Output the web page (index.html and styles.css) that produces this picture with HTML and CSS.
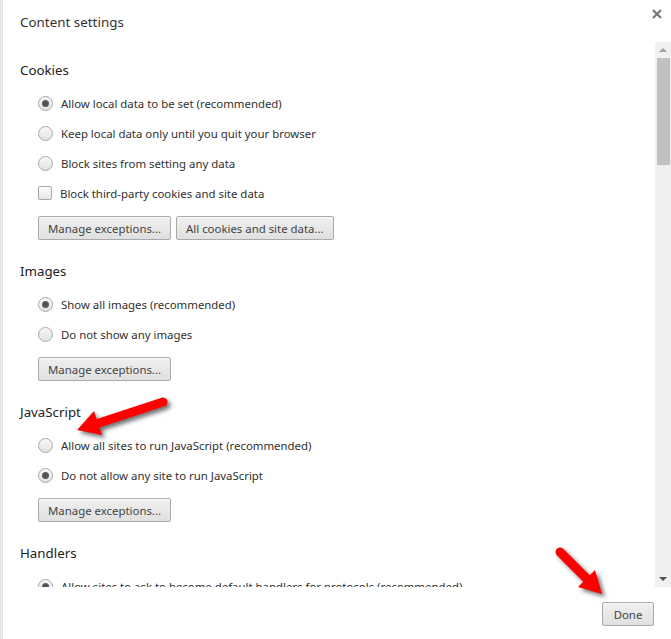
FILE: index.html
```html
<!DOCTYPE html>
<html lang="en">
<head>
    <meta charset="UTF-8">
    <meta name="viewport" content="width=device-width, initial-scale=1.0">
    <title>Content settings</title>
    <link rel="stylesheet" href="styles.css">
</head>
<body>
    <div class="page">
        <div class="edge"></div>

        <div class="dialog">
            <!-- Header -->
            <div class="dialog-header">
                <h1 class="dialog-title">Content settings</h1>
                <button class="close-button" aria-label="Close">
                    <svg width="10" height="10" viewBox="0 0 10 10">
                        <path d="M1 1 L9 9 M9 1 L1 9" stroke="#777" stroke-width="2.2" fill="none"/>
                    </svg>
                </button>
            </div>

            <!-- Scrolling body -->
            <div class="dialog-body">
                <div class="settings">
                    <section class="section first">
                        <h3>Cookies</h3>
                        <label class="row"><span class="radio checked"></span>Allow local data to be set (recommended)</label>
                        <label class="row"><span class="radio"></span>Keep local data only until you quit your browser</label>
                        <label class="row"><span class="radio"></span>Block sites from setting any data</label>
                        <label class="row"><span class="checkbox"></span>Block third-party cookies and site data</label>
                        <div class="buttons">
                            <button class="btn">Manage exceptions...</button>
                            <button class="btn">All cookies and site data...</button>
                        </div>
                    </section>

                    <section class="section">
                        <h3>Images</h3>
                        <label class="row"><span class="radio checked"></span>Show all images (recommended)</label>
                        <label class="row"><span class="radio"></span>Do not show any images</label>
                        <div class="buttons">
                            <button class="btn">Manage exceptions...</button>
                        </div>
                    </section>

                    <section class="section">
                        <h3>JavaScript</h3>
                        <label class="row"><span class="radio"></span>Allow all sites to run JavaScript (recommended)</label>
                        <label class="row"><span class="radio checked"></span>Do not allow any site to run JavaScript</label>
                        <div class="buttons">
                            <button class="btn">Manage exceptions...</button>
                        </div>
                    </section>

                    <section class="section">
                        <h3>Handlers</h3>
                        <label class="row"><span class="radio checked"></span>Allow sites to ask to become default handlers for protocols (recommended)</label>
                    </section>
                </div>

                <!-- Fake scrollbar -->
                <div class="scrollbar">
                    <span class="arrow up"></span>
                    <div class="thumb"></div>
                    <span class="arrow down"></span>
                </div>
            </div>

            <!-- Footer -->
            <div class="dialog-footer">
                <button class="btn done">Done</button>
            </div>
        </div>
    </div>

    <!-- Red annotation arrows drawn over the screenshot -->
    <svg class="annotations" width="671" height="639" viewBox="0 0 671 639">
        <g class="arrow-mark">
            <line x1="163" y1="402" x2="99" y2="423" stroke="#f00" stroke-width="9" stroke-linecap="round"/>
            <polygon points="77,430 102,435 94,411" fill="#f00"/>
        </g>
        <g class="arrow-mark">
            <line x1="560" y1="552" x2="588" y2="580" stroke="#f00" stroke-width="9" stroke-linecap="round"/>
            <polygon points="602,594 578,587 595,570" fill="#f00"/>
        </g>
    </svg>
</body>
</html>
```

FILE: styles.css
```css
/* General Styles */
body {
    margin: 0;
    font-family: "Noto Sans", "Open Sans", sans-serif;
    font-size: 11.4px;
    color: #303030;
    background-color: white;
}

.page {
    display: flex;
    height: 639px;
    overflow: hidden;
}

.edge {
    width: 3px;
    background: linear-gradient(to right, #e4e4e4, #ececec 60%, #d8d8d8);
    box-shadow: 1px 0 2px rgba(0, 0, 0, 0.08);
}

.dialog {
    flex: 1;
    display: flex;
    flex-direction: column;
    background-color: white;
}

/* Header */
.dialog-header {
    height: 42px;
    display: flex;
    justify-content: space-between;
    align-items: flex-start;
}

.dialog-title {
    margin: 12px 0 0 17px;
    font-size: 13.4px;
    font-weight: normal;
    line-height: 20px;
    color: #333;
}

.close-button {
    margin: 9px 9px 0 0;
    padding: 0;
    width: 10px;
    height: 10px;
    border: none;
    background: none;
    cursor: pointer;
}

.close-button svg {
    display: block;
}

/* Body */
.dialog-body {
    height: 545px;
    display: flex;
}

.settings {
    flex: 1;
    overflow: hidden;
    padding-left: 17px;
}

.section {
    margin-top: 21px;
}

.section.first {
    margin-top: 18px;
}

.section h3 {
    margin: 0 0 8px 0;
    font-size: 13.3px;
    font-weight: normal;
    line-height: 20px;
    color: #222;
}

.row {
    display: flex;
    align-items: center;
    height: 30px;
    padding-left: 18px;
    white-space: nowrap;
}

.radio {
    width: 13px;
    height: 13px;
    margin-right: 8px;
    border: 1px solid #a9a9a9;
    border-radius: 50%;
    background: linear-gradient(#f8f8f8, #e2e2e2);
    display: flex;
    justify-content: center;
    align-items: center;
    flex-shrink: 0;
}

.radio.checked::after {
    content: "";
    width: 7px;
    height: 7px;
    border-radius: 50%;
    background: radial-gradient(#4a4a4a, #666);
}

.checkbox {
    width: 12px;
    height: 12px;
    margin-right: 8px;
    border: 1px solid #a9a9a9;
    border-radius: 2px;
    background: linear-gradient(#fbfbfb, #e6e6e6);
    flex-shrink: 0;
}

.buttons {
    display: flex;
    gap: 5px;
    margin-top: 8px;
    padding-left: 18px;
}

.btn {
    height: 24px;
    padding: 0 9px;
    font-family: inherit;
    font-size: 11.4px;
    color: #444;
    border: 1px solid #aaa;
    border-radius: 2px;
    background: linear-gradient(#f0f0f0, #e0e0e0);
    box-shadow: inset 0 1px 0 #fafafa;
    cursor: pointer;
}

/* Scrollbar */
.scrollbar {
    width: 16px;
    background-color: #f0f0f0;
    display: flex;
    flex-direction: column;
    align-items: center;
}

.thumb {
    width: 13px;
    height: 107px;
    margin-left: 1px;
    background-color: #c1c1c1;
}

.arrow {
    width: 0;
    height: 0;
    border-left: 4px solid transparent;
    border-right: 4px solid transparent;
}

.arrow.up {
    margin: 6px 0 6px 0;
    border-bottom: 4px solid #a3a3a3;
}

.arrow.down {
    margin-top: auto;
    margin-bottom: 6px;
    border-top: 4px solid #505050;
}

/* Footer */
.dialog-footer {
    flex: 1;
    display: flex;
    justify-content: flex-end;
    align-items: flex-start;
    padding: 15px 17px 0 0;
}

.btn.done {
    width: 52px;
    height: 24px;
    padding: 0;
}

/* Annotations */
.annotations {
    position: absolute;
    top: 0;
    left: 0;
    pointer-events: none;
}

.arrow-mark {
    filter: drop-shadow(3px 3px 2px rgba(0, 0, 0, 0.55));
}
```
